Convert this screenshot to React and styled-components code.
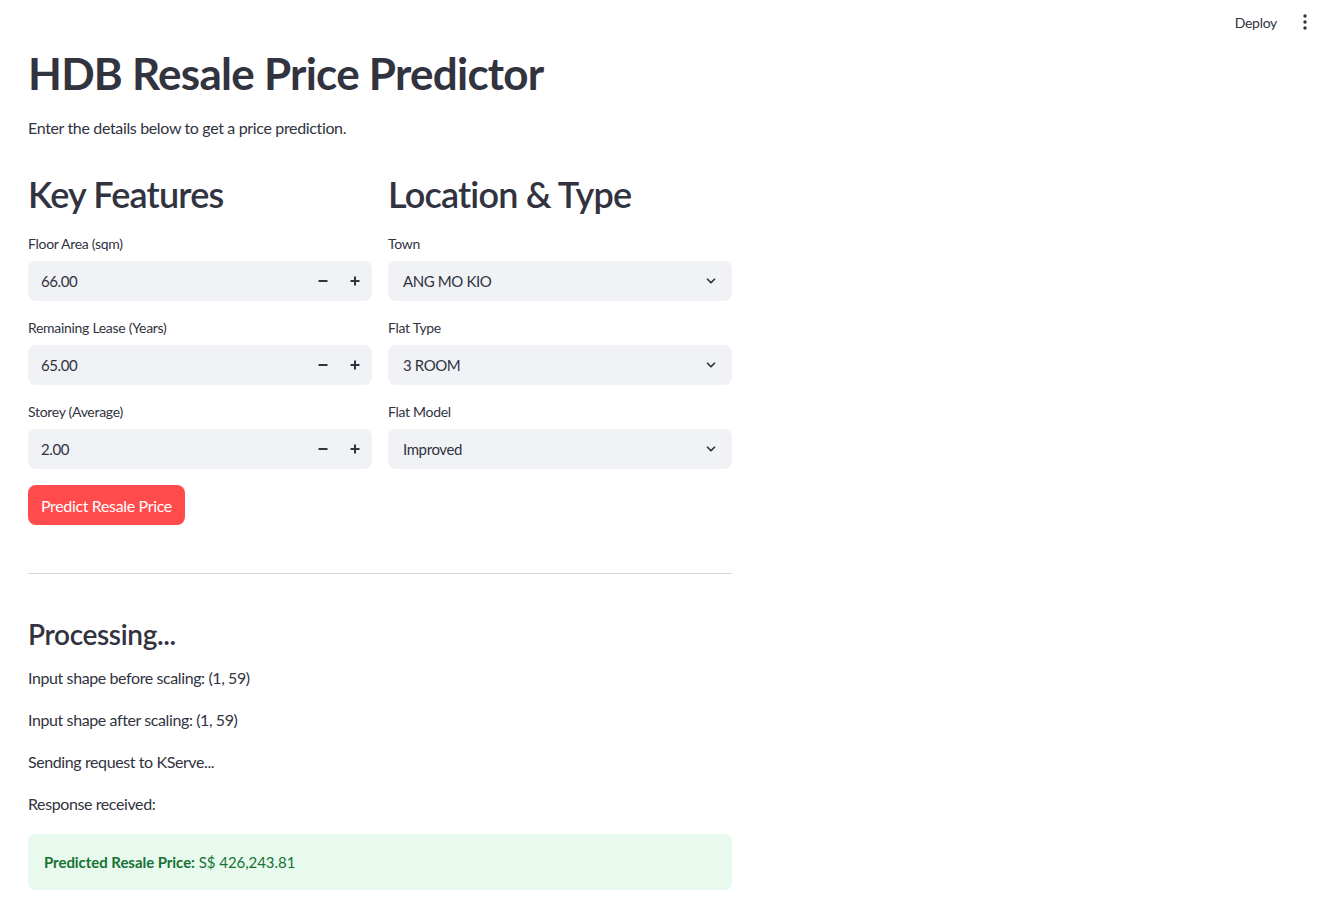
import styled, { createGlobalStyle } from "styled-components";

const Global = createGlobalStyle`
  html, body {
    margin: 0;
    padding: 0;
    background: #ffffff;
  }
  body {
    font-family: "Lato", "Noto Sans", sans-serif;
    color: #31333f;
    letter-spacing: -0.3px;
  }
  * { box-sizing: border-box; }
`;

const Page = styled.div`
  min-height: 897px;
  display: flex;
  flex-direction: column;
`;

const Header = styled.header`
  height: 44px;
  display: flex;
  align-items: center;
  justify-content: flex-end;
  gap: 16px;
  padding-right: 2px;
`;

const DeployBtn = styled.span`
  font-size: 14px;
  color: #31333f;
`;

const MenuDots = styled.span`
  width: 24px;
  height: 24px;
  display: flex;
  align-items: center;
  justify-content: center;
`;

const Main = styled.main`
  width: 704px;
  margin-left: 28px;
  display: flex;
  flex-direction: column;
`;

const Title = styled.h1`
  margin: 3px 0 0;
  font-size: 44px;
  line-height: 53px;
  font-weight: 700;
  letter-spacing: -0.75px;
`;

const Lead = styled.p`
  margin: 15px 0 0;
  font-size: 16px;
  line-height: 26px;
  letter-spacing: -0.35px;
`;

const Columns = styled.div`
  margin-top: 32px;
  display: grid;
  grid-template-columns: 1fr 1fr;
  gap: 16px;
`;

const Col = styled.div`
  display: flex;
  flex-direction: column;
`;

const SectionTitle = styled.h2`
  margin: 0 0 18px;
  font-size: 36px;
  line-height: 43px;
  font-weight: 600;
  letter-spacing: -0.8px;
`;

const Field = styled.div`
  display: flex;
  flex-direction: column;
  margin-bottom: 17px;
`;

const Label = styled.label`
  font-size: 14px;
  line-height: 20px;
  margin-bottom: 7px;
`;

const Box = styled.div`
  height: 40px;
  border-radius: 8px;
  background: #f0f2f6;
  display: flex;
  align-items: center;
  padding-left: ${(p) => (p.$select ? "15px" : "13px")};
  padding-right: ${(p) => (p.$select ? "14px" : "1px")};
  font-size: 15px;
  letter-spacing: -0.4px;
`;

const Value = styled.span`
  flex: 1;
`;

const Step = styled.span`
  width: 32px;
  height: 40px;
  display: flex;
  align-items: center;
  justify-content: center;
`;

const PrimaryButton = styled.button`
  align-self: flex-start;
  margin-top: -1px;
  height: 40px;
  padding: 0 13px;
  border: none;
  border-radius: 8px;
  background: #ff4b4b;
  color: #ffffff;
  font-family: inherit;
  font-size: 16px;
  letter-spacing: -0.35px;
`;

const Divider = styled.hr`
  margin: 48px 0 0;
  border: none;
  border-top: 1px solid #d5d6d9;
  height: 0;
`;

const Sub = styled.h3`
  margin: 43px 0 0;
  font-size: 28px;
  line-height: 34px;
  font-weight: 600;
  letter-spacing: -0.35px;
`;

const Line = styled.p`
  margin: 14px 0 0;
  font-size: 16px;
  line-height: 26px;
  letter-spacing: -0.4px;
  & + & {
    margin-top: 16px;
  }
`;

const Success = styled.div`
  margin-top: 17px;
  height: 56px;
  border-radius: 8px;
  background: #e8f9ee;
  color: #177233;
  display: flex;
  align-items: center;
  padding-left: 16px;
  font-size: 15px;
  letter-spacing: -0.05px;
`;

const Minus = () => (
  <svg width="10" height="10" viewBox="0 0 10 10">
    <rect x="0.5" y="4" width="9" height="2" fill="#31333f" />
  </svg>
);

const Plus = () => (
  <svg width="10" height="10" viewBox="0 0 10 10">
    <rect x="0.5" y="4" width="9" height="2" fill="#31333f" />
    <rect x="4" y="0.5" width="2" height="9" fill="#31333f" />
  </svg>
);

const Chevron = () => (
  <svg width="14" height="14" viewBox="0 0 24 24" fill="none" stroke="#31333f" strokeWidth="3" strokeLinecap="round" strokeLinejoin="round">
    <path d="M6 9l6 6 6-6" />
  </svg>
);

const NumberInput = ({ label, value }) => (
  <Field>
    <Label>{label}</Label>
    <Box>
      <Value>{value}</Value>
      <Step><Minus /></Step>
      <Step><Plus /></Step>
    </Box>
  </Field>
);

const Select = ({ label, value }) => (
  <Field>
    <Label>{label}</Label>
    <Box $select>
      <Value>{value}</Value>
      <Chevron />
    </Box>
  </Field>
);

export default function App() {
  return (
    <Page>
      <Global />
      <Header>
        <DeployBtn>Deploy</DeployBtn>
        <MenuDots>
          <svg width="4" height="16" viewBox="0 0 4 16">
            <circle cx="2" cy="2" r="1.7" fill="#31333f" />
            <circle cx="2" cy="8" r="1.7" fill="#31333f" />
            <circle cx="2" cy="14" r="1.7" fill="#31333f" />
          </svg>
        </MenuDots>
      </Header>
      <Main>
        <Title>HDB Resale Price Predictor</Title>
        <Lead>Enter the details below to get a price prediction.</Lead>
        <Columns>
          <Col>
            <SectionTitle>Key Features</SectionTitle>
            <NumberInput label="Floor Area (sqm)" value="66.00" />
            <NumberInput label="Remaining Lease (Years)" value="65.00" />
            <NumberInput label="Storey (Average)" value="2.00" />
            <PrimaryButton>Predict Resale Price</PrimaryButton>
          </Col>
          <Col>
            <SectionTitle>Location &amp; Type</SectionTitle>
            <Select label="Town" value="ANG MO KIO" />
            <Select label="Flat Type" value="3 ROOM" />
            <Select label="Flat Model" value="Improved" />
          </Col>
        </Columns>
        <Divider />
        <Sub>Processing...</Sub>
        <Line>Input shape before scaling: (1, 59)</Line>
        <Line>Input shape after scaling: (1, 59)</Line>
        <Line>Sending request to KServe...</Line>
        <Line>Response received:</Line>
        <Success>
          <b>Predicted Resale Price:</b>&nbsp;S$ 426,243.81
        </Success>
      </Main>
    </Page>
  );
}
